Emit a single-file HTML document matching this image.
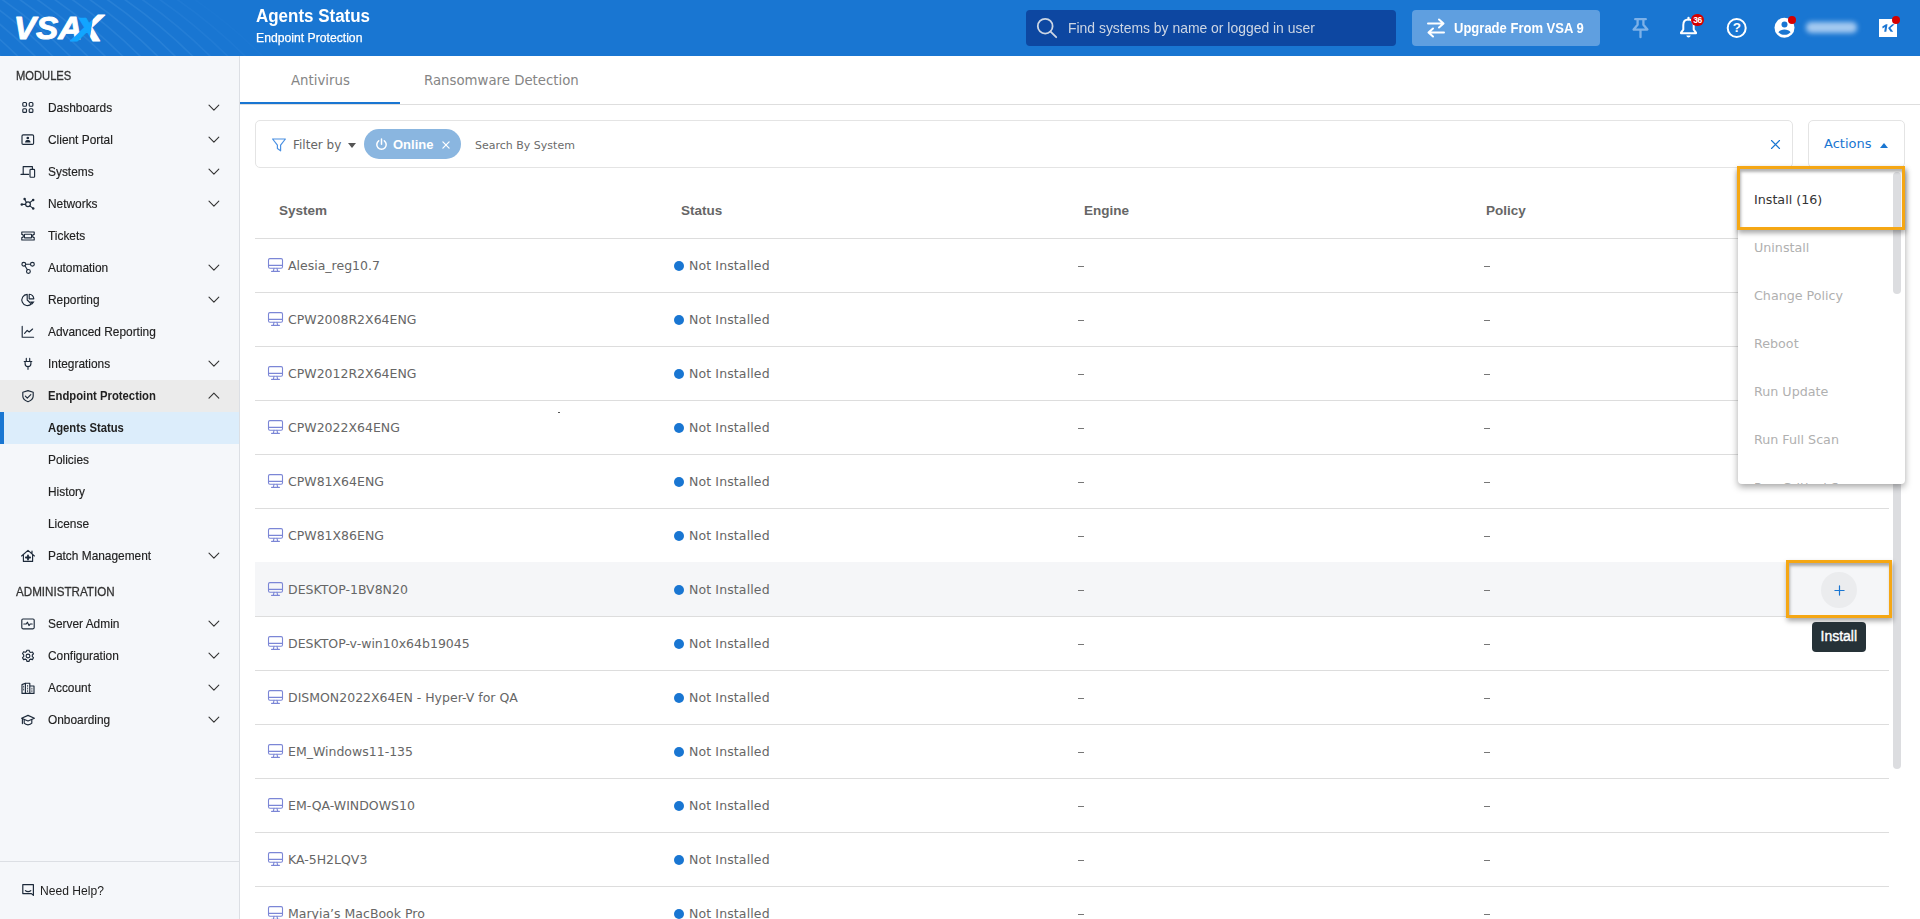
<!DOCTYPE html>
<html lang="en">
<head>
<meta charset="utf-8">
<title>Agents Status</title>
<style>
*{box-sizing:border-box;margin:0;padding:0}
html,body{width:1920px;height:919px;overflow:hidden;background:#fff}
body{font-family:"Liberation Sans",sans-serif;color:#212121;position:relative}
i{display:block;font-style:normal}
.sx{display:inline-block;transform-origin:0 50%;white-space:nowrap}
/* header */
#hdr{position:absolute;left:0;top:0;width:1920px;height:56px;background:#1976d2;overflow:hidden}
#hdr .title{position:absolute;left:256px;top:4px;font-size:18px;font-weight:bold;color:#fff;line-height:24px;transform:scaleX(.942);transform-origin:0 50%;white-space:nowrap}
#hdr .sub{position:absolute;left:256px;top:30px;font-size:13px;color:#fff;line-height:16px;transform:scaleX(.938);transform-origin:0 50%;white-space:nowrap;-webkit-text-stroke:.25px #fff}
#search{position:absolute;left:1026px;top:10px;width:370px;height:36px;background:#0d47a1;border-radius:4px}
#search span{position:absolute;left:42px;top:8px;font-size:15px;line-height:20px;color:#cdd6e4;white-space:nowrap;transform:scaleX(.928);transform-origin:0 50%}
#search svg{position:absolute;left:10px;top:7px;width:22px;height:22px}
#upg{position:absolute;left:1412px;top:10px;width:188px;height:36px;background:#5f9fe0;border-radius:4px}
#upg span{position:absolute;left:42px;top:8px;font-size:14px;font-weight:bold;line-height:20px;color:#fff;white-space:nowrap;transform:scaleX(.93);transform-origin:0 50%}
#upg svg{position:absolute;left:13px;top:7px;width:22px;height:22px}
.hi1{position:absolute}
/* sidebar */
#side{position:absolute;left:0;top:56px;width:240px;height:863px;background:#f5f7fa;border-right:1px solid #dcdfe4}
.sec{position:absolute;left:16px;font-size:13px;color:#333;line-height:16px;white-space:nowrap}
.sec .sx{transform:scaleX(.86);-webkit-text-stroke:.3px #333}
.it{position:absolute;left:0;width:239px;height:32px}
.it .lb{position:absolute;left:48px;top:7px;font-size:13px;line-height:18px;color:#212121;white-space:nowrap;transform:scaleX(.915);transform-origin:0 50%;-webkit-text-stroke:.15px #212121}
.it.b .lb{font-weight:bold;-webkit-text-stroke:0;transform:scaleX(.868)}
.it svg.ic{position:absolute;left:20px;top:8px;width:16px;height:16px}
.it svg.ch{position:absolute;left:207px;top:10px;width:13px;height:12px}
.help{position:absolute;left:0;top:819px;width:239px;height:32px}
.help svg{position:absolute;left:20px;top:7px;width:16px;height:16px}
.help .lb2{position:absolute;left:40px;top:7px;font-size:13px;line-height:18px;color:#212121;white-space:nowrap;transform:scaleX(.93);transform-origin:0 50%}
/* main */
.os{font-family:"DejaVu Sans","Liberation Sans",sans-serif}
#tabs{position:absolute;left:240px;top:56px;width:1680px;height:49px;border-bottom:1px solid #dedede}
.tab{position:absolute;top:0;height:48px;font-size:13.300px;line-height:49px;color:#858585;white-space:nowrap}
#tabline{position:absolute;left:240px;top:102px;width:160px;height:2px;background:#1976d2}
#filter{position:absolute;left:255px;top:120px;width:1538px;height:48px;border:1px solid #e4e4e4;border-radius:5px;background:#fff}
#filter svg.fn{position:absolute;left:15px;top:16px;width:16px;height:16px}
#filter .fb{position:absolute;left:37px;top:15px;font-size:12px;line-height:18px;color:#666;white-space:nowrap}
#filter .car{position:absolute;left:92px;top:22px;width:0;height:0;border-left:4.500px solid transparent;border-right:4.500px solid transparent;border-top:5px solid #555}
#filter .ph{position:absolute;left:219px;top:16px;font-size:11px;line-height:18px;color:#6b6b6b;white-space:nowrap}
#filter svg.x{position:absolute;left:1514px;top:18px;width:11px;height:11px}
#chip{position:absolute;left:364px;top:129px;width:97px;height:30px;border-radius:15px;background:#8ab6e0}
#chip svg.pw{position:absolute;left:11px;top:9px;width:13px;height:13px}
#chip span{position:absolute;left:29px;top:7px;font-size:13px;line-height:18px;font-weight:bold;color:#fff;white-space:nowrap}
#chip svg.x{position:absolute;left:77.500px;top:11.500px;width:8px;height:8px}
#actions{position:absolute;left:1808px;top:120px;width:97px;height:48px;border:1px solid #e4e4e4;border-radius:5px;background:#fff}
#actions span{position:absolute;left:15px;top:14px;font-size:13px;line-height:18px;color:#1976d2;white-space:nowrap}
#actions i{position:absolute;left:71px;top:21.500px;width:0;height:0;border-left:4.600px solid transparent;border-right:4.600px solid transparent;border-bottom:5.200px solid #1976d2}
/* table */
.th{position:absolute;top:202px;font-size:13.5px;line-height:18px;font-weight:bold;color:#666;white-space:nowrap}
.hl{position:absolute;left:255px;width:1634px;height:1px;background:#dddddd}
.row{position:absolute;left:255px;width:1634px;height:54px}
.row .nm{position:absolute;left:33px;top:19px;font-size:12.500px;line-height:18px;color:#666;white-space:nowrap}
.row .st{position:absolute;left:434px;top:19px;letter-spacing:.12px;font-size:12.500px;line-height:18px;color:#666;white-space:nowrap}
.row .dot{position:absolute;left:419px;top:23px;width:10px;height:10px;border-radius:50%;background:#1976d2}
.row .d1{position:absolute;left:823px;top:28px;width:6px;height:1px;background:#777}
.row .d2{position:absolute;left:1229px;top:28px;width:6px;height:1px;background:#777}
.row svg.pc{position:absolute;left:12px;top:19px;width:17px;height:16px}
#pscroll{position:absolute;left:1893px;top:238px;width:8px;height:531px;border-radius:4px;background:#dcdde0}
/* dropdown */
#dd{position:absolute;left:1738px;top:168px;width:167px;height:316px;background:#fff;border-radius:0 0 4px 4px;box-shadow:0 3px 7px rgba(0,0,0,.35);overflow:hidden}
#dd .o{position:absolute;left:16px;font-size:12.700px;line-height:18px;color:#b0b0b0;white-space:nowrap}
#dd .sb{position:absolute;left:155px;top:4px;width:8px;height:122px;border-radius:4px;background:#dcdde0}
.hi{position:absolute;border:3px solid #f5a714;box-shadow:1px 3px 5px rgba(0,0,0,.35), inset 1px 3px 3px rgba(0,0,0,.3)}
#plus{position:absolute;left:1821px;top:572px;width:36px;height:36px;border-radius:50%;background:#ebecee}
#plus svg{position:absolute;left:12.500px;top:12.500px;width:11px;height:11px}
#tip{position:absolute;left:1812px;top:622px;width:54px;height:30px;border-radius:4px;background:#263238}
#tip span{position:absolute;left:8.500px;top:4px;font-size:14px;line-height:20px;color:#fff;white-space:nowrap;-webkit-text-stroke:.4px #fff}
</style>
</head>
<body>
<div id="hdr">
  <svg class="hi1" style="left:0;top:0" width="300" height="56" viewBox="0 0 300 56"><g fill="none" stroke="#3187da" stroke-width="1.600" opacity=".6"><path d="M-70.0 -2Q-32.0 24 2.0 58" opacity="1.00"/><path d="M-52.5 -2Q-14.5 24 19.5 58" opacity="1.00"/><path d="M-35.0 -2Q3.0 24 37.0 58" opacity="1.00"/><path d="M-17.5 -2Q20.5 24 54.5 58" opacity="1.00"/><path d="M0.0 -2Q38.0 24 72.0 58" opacity="1.00"/><path d="M17.5 -2Q55.5 24 89.5 58" opacity="1.00"/><path d="M35.0 -2Q73.0 24 107.0 58" opacity="1.00"/><path d="M52.5 -2Q90.5 24 124.5 58" opacity="1.00"/><path d="M70.0 -2Q108.0 24 142.0 58" opacity="1.00"/><path d="M87.5 -2Q125.5 24 159.5 58" opacity="1.00"/><path d="M105.0 -2Q143.0 24 177.0 58" opacity="1.00"/><path d="M122.5 -2Q160.5 24 194.5 58" opacity="0.97"/><path d="M140.0 -2Q178.0 24 212.0 58" opacity="0.78"/><path d="M157.5 -2Q195.5 24 229.5 58" opacity="0.58"/><path d="M175.0 -2Q213.0 24 247.0 58" opacity="0.39"/><path d="M192.5 -2Q230.5 24 264.5 58" opacity="0.19"/></g></svg>
  <svg class="hi1" style="left:10px;top:8px" width="100" height="40" viewBox="0 0 100 40" font-family="Liberation Sans, sans-serif" font-weight="bold" font-style="italic" stroke-width=".9" stroke-linejoin="round"><defs><clipPath id="cl"><polygon points="55,9.800 83,9.800 78.500,40 55,40"/></clipPath><clipPath id="cr"><polygon points="84.500,0 100,0 100,40 78.500,40"/></clipPath></defs><text x="3.800" y="30.700" font-size="31" fill="#fff" stroke="#fff" textLength="68.500" lengthAdjust="spacingAndGlyphs">VSA</text><g clip-path="url(#cl)"><text x="62.500" y="33" font-size="36.600" fill="#12a5ff" stroke="#12a5ff" textLength="30" lengthAdjust="spacingAndGlyphs">X</text></g><g clip-path="url(#cr)"><text x="62.500" y="33" font-size="36.600" fill="#fff" stroke="#fff" textLength="30" lengthAdjust="spacingAndGlyphs">X</text></g></svg>
  <div class="title">Agents Status</div>
  <div class="sub">Endpoint Protection</div>
  <div id="search"><svg viewBox="0 0 22 22" fill="none" stroke="#cdd6e4" stroke-width="1.800" stroke-linecap="round"><circle cx="9.200" cy="9.200" r="7.400"/><path d="M14.600 14.600l5.600 5.600"/></svg><span>Find systems by name or logged in user</span></div>
  <div id="upg"><svg viewBox="0 0 22 22" fill="none" stroke="#fff" stroke-width="2" stroke-linecap="round" stroke-linejoin="round"><path d="M3 6.500h15M14 2.500l4.500 4-4.500 4M19 15.500H4M8 11.500l-4.500 4 4.500 4"/></svg><span>Upgrade From VSA 9</span></div>
  <svg class="hi1" style="left:1630px;top:16px" width="22" height="24" viewBox="0 0 22 24" fill="none" stroke="#7db1e8" stroke-width="2.300" stroke-linecap="round" stroke-linejoin="round"><path d="M5.200 3.200h10.600M7.600 3.400v5.400L3.600 13.600h13.800L13.400 8.800V3.400M10.500 13.800v7.400"/></svg>
  <svg class="hi1" style="left:1678px;top:16px" width="22" height="24" viewBox="0 0 22 24" fill="none" stroke="#fff" stroke-width="2" stroke-linejoin="round"><path d="M10.500 3.600c-3.200 0-5.200 2.200-5.200 5.400v4.600L3 16.600v.6h15v-.6l-2.300-3V9c0-3.200-2-5.400-5.200-5.400z"/><path d="M10.500 1.800v1.600" stroke-linecap="round" stroke-width="2.200"/><path d="M8.300 19.600h4.400c-.3 1.300-1.100 2-2.200 2s-1.900-.7-2.200-2z" fill="#fff" stroke="none"/></svg>
  <div class="hi1" style="left:1691.300px;top:13.700px;width:12.600px;height:12.600px;border-radius:50%;background:#d50000"></div>
  <div class="hi1" style="left:1691.300px;top:15.500px;width:12.600px;text-align:center;font-size:8.500px;line-height:9px;font-weight:bold;color:#fff;letter-spacing:-.4px">36</div>
  <svg class="hi1" style="left:1725px;top:16px" width="24" height="24" viewBox="0 0 24 24" fill="none" stroke="#fff" stroke-width="2"><circle cx="11.700" cy="12" r="9"/></svg>
  <div class="hi1" style="left:1728px;top:18px;width:17.500px;text-align:center;font-size:13.500px;line-height:20px;font-weight:bold;color:#fff">?</div>
  <svg class="hi1" style="left:1773px;top:16px" width="24" height="24" viewBox="0 0 24 24"><circle cx="11.500" cy="11.800" r="10" fill="#fff"/><circle cx="11.500" cy="8.600" r="3" fill="#1976d2"/><path d="M5.400 16.200c1.200-1.800 3.600-2.700 6.100-2.700s4.900.9 6.100 2.700c-1.600 1.700-3.600 2.600-6.100 2.600s-4.500-.9-6.100-2.600z" fill="#1976d2"/></svg>
  <div class="hi1" style="left:1787.900px;top:15.900px;width:8px;height:8px;border-radius:50%;background:#d50000"></div>
  <div class="hi1" style="left:1806px;top:22px;width:51px;height:10.500px;border-radius:5px;background:#a4c9f0;filter:blur(2.600px)"></div>
  <div class="hi1" style="left:1879px;top:19px;width:18.300px;height:18.200px;background:#fff"></div>
  <svg class="hi1" style="left:1879px;top:19px" width="18.300" height="18.200" viewBox="0 0 18.300 18.200" fill="#1b76d3"><path d="M3.300 7.600L7 5.300h1.500L7.300 12.700H5.200l.8-4.700-2.400 1.400zM13.200 5.300h2.500l-4.300 3.600 2.800 3.800h-2.600l-2.500-3.700z"/></svg>
  <div class="hi1" style="left:1892.100px;top:15.900px;width:8px;height:8px;border-radius:50%;background:#d50000"></div>
</div>
<div id="side">
<div class="sec" style="top:12px"><span class="sx">MODULES</span></div>
<div class="it" style="top:36px"><svg class="ic" viewBox="0 0 16 16" fill="none" stroke="#1d2a3a" stroke-width="1.15" stroke-linecap="round" stroke-linejoin="round"><rect x="2.8" y="2.5" width="3.7" height="3.7" rx="1"/><rect x="9.2" y="2.5" width="3.7" height="3.7" rx="1"/><rect x="2.8" y="8.7" width="3.7" height="3.7" rx="1"/><rect x="9.2" y="8.7" width="3.7" height="3.7" rx="1"/></svg><span class="lb">Dashboards</span><svg class="ch" viewBox="0 0 13 12" fill="none" stroke="#333" stroke-width="1.1" stroke-linecap="round" stroke-linejoin="round"><path d="M2 3.200l4.900 5 4.900-5"/></svg></div>
<div class="it" style="top:68px"><svg class="ic" viewBox="0 0 16 16" fill="none" stroke="#1d2a3a" stroke-width="1.15" stroke-linecap="round" stroke-linejoin="round"><rect x="2" y="2.8" width="11.6" height="9.6" rx="1.2"/><circle cx="7.8" cy="6" r="1.35" fill="#1d2a3a" stroke="none"/><path d="M5.1 10.4c0-1.800 1.100-2.400 2.700-2.400s2.700.6 2.700 2.400z" fill="#1d2a3a" stroke="none"/></svg><span class="lb">Client Portal</span><svg class="ch" viewBox="0 0 13 12" fill="none" stroke="#333" stroke-width="1.1" stroke-linecap="round" stroke-linejoin="round"><path d="M2 3.200l4.900 5 4.900-5"/></svg></div>
<div class="it" style="top:100px"><svg class="ic" viewBox="0 0 16 16" fill="none" stroke="#1d2a3a" stroke-width="1.15" stroke-linecap="round" stroke-linejoin="round"><path d="M3.200 10V2.600h9.200v2.400M1 10.400h7.600"/><rect x="10" y="5.400" width="4.600" height="7.800" rx="0.8"/></svg><span class="lb">Systems</span><svg class="ch" viewBox="0 0 13 12" fill="none" stroke="#333" stroke-width="1.1" stroke-linecap="round" stroke-linejoin="round"><path d="M2 3.200l4.900 5 4.900-5"/></svg></div>
<div class="it" style="top:132px"><svg class="ic" viewBox="0 0 16 16" fill="none" stroke="#1d2a3a" stroke-width="1.15" stroke-linecap="round" stroke-linejoin="round"><circle cx="8" cy="8.2" r="2.4"/><path d="M6.4 6.4L4.8 3.4M9.8 6.6l3-2.4M9.8 9.9l3 2.2M5.6 8.4H2.2"/><circle cx="4.6" cy="3" r="1.25" fill="#1d2a3a" stroke="none"/><circle cx="13.2" cy="3.9" r="1.25" fill="#1d2a3a" stroke="none"/><circle cx="13.2" cy="12.4" r="1.25" fill="#1d2a3a" stroke="none"/><circle cx="1.8" cy="8.4" r="1.25" fill="#1d2a3a" stroke="none"/></svg><span class="lb">Networks</span><svg class="ch" viewBox="0 0 13 12" fill="none" stroke="#333" stroke-width="1.1" stroke-linecap="round" stroke-linejoin="round"><path d="M2 3.200l4.900 5 4.900-5"/></svg></div>
<div class="it" style="top:164px"><svg class="ic" viewBox="0 0 16 16" fill="none" stroke="#1d2a3a" stroke-width="1.15" stroke-linecap="round" stroke-linejoin="round"><path d="M1.8 4h12.4v2.4a1.6 1.6 0 0 0 0 3.2V12H1.8V9.6a1.6 1.6 0 0 0 0-3.2z"/><rect x="4.4" y="6.2" width="7.2" height="3.6" rx="0.6"/></svg><span class="lb">Tickets</span></div>
<div class="it" style="top:196px"><svg class="ic" viewBox="0 0 16 16" fill="none" stroke="#1d2a3a" stroke-width="1.15" stroke-linecap="round" stroke-linejoin="round"><circle cx="3.8" cy="4.200" r="1.9"/><circle cx="12.400" cy="4.200" r="1.9"/><circle cx="8.400" cy="11.400" r="1.9"/><path d="M5.700 4.200h4.800M4.900 5.800l2.500 4"/></svg><span class="lb">Automation</span><svg class="ch" viewBox="0 0 13 12" fill="none" stroke="#333" stroke-width="1.1" stroke-linecap="round" stroke-linejoin="round"><path d="M2 3.200l4.900 5 4.900-5"/></svg></div>
<div class="it" style="top:228px"><svg class="ic" viewBox="0 0 16 16" fill="none" stroke="#1d2a3a" stroke-width="1.15" stroke-linecap="round" stroke-linejoin="round"><path d="M7.2 2.4a5.6 5.6 0 1 0 4.2 9.6L7.2 8z"/><path d="M9.2 2.2a5 5 0 0 1 4.6 4.6H9.2z"/><path d="M10 9.4h4.6l-2.3 3z" fill="#1d2a3a" stroke="none"/></svg><span class="lb">Reporting</span><svg class="ch" viewBox="0 0 13 12" fill="none" stroke="#333" stroke-width="1.1" stroke-linecap="round" stroke-linejoin="round"><path d="M2 3.200l4.900 5 4.900-5"/></svg></div>
<div class="it" style="top:260px"><svg class="ic" viewBox="0 0 16 16" fill="none" stroke="#1d2a3a" stroke-width="1.15" stroke-linecap="round" stroke-linejoin="round"><path d="M2.2 2.4v10.8h11.4"/><path d="M4.6 9.4l2.6-3 2 1.6 3.4-3"/></svg><span class="lb">Advanced Reporting</span></div>
<div class="it" style="top:292px"><svg class="ic" viewBox="0 0 16 16" fill="none" stroke="#1d2a3a" stroke-width="1.15" stroke-linecap="round" stroke-linejoin="round"><path d="M6.300 2.400v3M9.700 2.400v3M4.200 5.500h7.600M5.100 5.700v2a2.900 2.900 0 0 0 5.800 0v-2M8 10.800v2.500"/></svg><span class="lb">Integrations</span><svg class="ch" viewBox="0 0 13 12" fill="none" stroke="#333" stroke-width="1.1" stroke-linecap="round" stroke-linejoin="round"><path d="M2 3.200l4.900 5 4.900-5"/></svg></div>
<div class="it b" style="top:324px;background:#ebebeb"><svg class="ic" viewBox="0 0 16 16" fill="none" stroke="#1d2a3a" stroke-width="1.15" stroke-linecap="round" stroke-linejoin="round"><path d="M8 2.600l5.200 1.600v3.800c0 2.800-2.100 4.600-5.200 5.700-3.100-1.100-5.200-2.900-5.200-5.700V4.200z"/><path d="M5.400 8.200l1.900 1.900 3.500-3.500"/></svg><span class="lb">Endpoint Protection</span><svg class="ch" viewBox="0 0 13 12" fill="none" stroke="#333" stroke-width="1.1" stroke-linecap="round" stroke-linejoin="round"><path d="M2 8.200l4.900-5 4.900 5"/></svg></div>
<div class="it" style="top:484px"><svg class="ic" viewBox="0 0 16 16" fill="none" stroke="#1d2a3a" stroke-width="1.15" stroke-linecap="round" stroke-linejoin="round"><path d="M1.6 8L8 2.4 14.4 8M3.4 6.8v6.6h9.2V6.8M12 5.6V3"/><path d="M8 7.4v4.2M5.9 9.5h4.2" stroke-width="1.8"/></svg><span class="lb">Patch Management</span><svg class="ch" viewBox="0 0 13 12" fill="none" stroke="#333" stroke-width="1.1" stroke-linecap="round" stroke-linejoin="round"><path d="M2 3.200l4.900 5 4.900-5"/></svg></div>
<div class="it" style="top:552px"><svg class="ic" viewBox="0 0 16 16" fill="none" stroke="#1d2a3a" stroke-width="1.15" stroke-linecap="round" stroke-linejoin="round"><rect x="1.8" y="3" width="12.4" height="9.8" rx="1.2"/><path d="M3.8 8h2.4l1.2-1.8 1.6 3.4 1.2-1.6h2"/></svg><span class="lb">Server Admin</span><svg class="ch" viewBox="0 0 13 12" fill="none" stroke="#333" stroke-width="1.1" stroke-linecap="round" stroke-linejoin="round"><path d="M2 3.200l4.900 5 4.900-5"/></svg></div>
<div class="it" style="top:584px"><svg class="ic" viewBox="0 0 16 16" fill="none" stroke="#1d2a3a" stroke-width="1.15" stroke-linecap="round" stroke-linejoin="round"><circle cx="8" cy="8" r="1.9"/><path d="M6.9 2.2h2.2l.4 1.6 1.3.7 1.6-.5 1.1 1.9-1.2 1.1v1.6l1.2 1.1-1.1 1.9-1.6-.5-1.3.7-.4 1.6H6.900l-.4-1.6-1.3-.7-1.6.5-1.100-1.900 1.200-1.100V6.800l-1.200-1.100 1.100-1.900 1.600.5 1.300-.7z"/></svg><span class="lb">Configuration</span><svg class="ch" viewBox="0 0 13 12" fill="none" stroke="#333" stroke-width="1.1" stroke-linecap="round" stroke-linejoin="round"><path d="M2 3.200l4.900 5 4.900-5"/></svg></div>
<div class="it" style="top:616px"><svg class="ic" viewBox="0 0 16 16" fill="none" stroke="#1d2a3a" stroke-width="1.15" stroke-linecap="round" stroke-linejoin="round"><path d="M2 4.600l3.400-1.400v10.200H2zM5.400 3.200h4.400v10.200H5.400zM9.800 6h4.200v7.400H9.800z"/><path d="M3.600 6.200v1M3.600 9v1M7.600 5.400v1M7.600 8v1M7.600 10.600v1M11.900 8.200v1M11.900 10.600v1" stroke-width=".8"/></svg><span class="lb">Account</span><svg class="ch" viewBox="0 0 13 12" fill="none" stroke="#333" stroke-width="1.1" stroke-linecap="round" stroke-linejoin="round"><path d="M2 3.200l4.900 5 4.900-5"/></svg></div>
<div class="it" style="top:648px"><svg class="ic" viewBox="0 0 16 16" fill="none" stroke="#1d2a3a" stroke-width="1.15" stroke-linecap="round" stroke-linejoin="round"><path d="M1.600 6.200L8 3.400l6.400 2.800L8 9z"/><path d="M4.200 7.600v3.600c1 1.200 2.400 1.600 3.800 1.600s2.800-.4 3.800-1.600V7.600M2.400 6.800v4.800"/></svg><span class="lb">Onboarding</span><svg class="ch" viewBox="0 0 13 12" fill="none" stroke="#333" stroke-width="1.1" stroke-linecap="round" stroke-linejoin="round"><path d="M2 3.200l4.900 5 4.900-5"/></svg></div>
<div class="it b" style="top:356px;background:#dcedfb"><div style="position:absolute;left:0;top:0;width:4px;height:32px;background:#1976d2"></div><span class="lb">Agents Status</span></div>
<div class="it" style="top:388px"><span class="lb">Policies</span></div>
<div class="it" style="top:420px"><span class="lb">History</span></div>
<div class="it" style="top:452px"><span class="lb">License</span></div>
<div class="sec" style="top:528px"><span class="sx" style="transform:scaleX(.894)">ADMINISTRATION</span></div>
<div style="position:absolute;left:0;top:805px;width:239px;height:1px;background:#dcdfe4"></div>
<div class="help"><svg viewBox="0 0 16 16" fill="none" stroke="#1d2a3a" stroke-width="1.2" stroke-linejoin="round" stroke-linecap="round"><path d="M2.800 2.600h10.600v10.800l-2-1.800H2.800z"/><path d="M5.400 8.600c.8.800 1.700 1 2.700 1s1.900-.2 2.700-1"/></svg><span class="lb2">Need Help?</span></div>
</div>
<div id="tabs">
  <div class="tab os" style="left:51px">Antivirus</div>
  <div class="tab os" style="left:184px">Ransomware Detection</div>
</div>
<div id="tabline"></div>
<div id="filter">
  <svg class="fn" viewBox="0 0 16 16" fill="none" stroke="#4a90e2" stroke-width="1.200" stroke-linejoin="round"><path d="M1.600 2h12.800L9.600 8.200v5.600L6.400 11.600V8.200z"/></svg>
  <span class="fb os">Filter by</span><i class="car"></i>
  <span class="ph os">Search By System</span>
  <svg class="x" viewBox="0 0 11 11" stroke="#1976d2" stroke-width="1.100" stroke-linecap="round"><path d="M1.500 1.500l8 8M9.500 1.500l-8 8"/></svg>
</div>
<div id="chip"><svg class="pw" viewBox="0 0 13 13" fill="none" stroke="#fff" stroke-width="1.500" stroke-linecap="round"><path d="M6.500 1v5.200"/><path d="M3.700 2.800a4.700 4.700 0 1 0 5.600 0"/></svg><span>Online</span><svg class="x" viewBox="0 0 9 9" stroke="#fff" stroke-width="1.400" stroke-linecap="round"><path d="M1 1l7 7M8 1l-7 7"/></svg></div>
<div id="actions"><span class="os">Actions</span><i></i></div>

<div class="th" style="left:279px">System</div>
<div class="th" style="left:681px">Status</div>
<div class="th" style="left:1084px">Engine</div>
<div class="th" style="left:1486px">Policy</div>
<div class="hl" style="top:238px"></div>
<div class="row" style="top:238px"><svg class="pc" viewBox="0 0 17 16" fill="none" stroke="#7b86d6" stroke-width="1.1" stroke-linejoin="round" stroke-linecap="round"><rect x="1.500" y="1.600" width="14" height="9.600" rx="1.400"/><path d="M1.500 8.400h14M7 11.400l-.6 2.600M10 11.400l.6 2.600M4.600 14.400h7.800"/></svg><span class="nm os">Alesia_reg10.7</span><i class="dot"></i><span class="st os">Not Installed</span><i class="d1"></i><i class="d2"></i></div>
<div class="hl" style="top:292px"></div>
<div class="row" style="top:292px"><svg class="pc" viewBox="0 0 17 16" fill="none" stroke="#7b86d6" stroke-width="1.1" stroke-linejoin="round" stroke-linecap="round"><rect x="1.500" y="1.600" width="14" height="9.600" rx="1.400"/><path d="M1.500 8.400h14M7 11.400l-.6 2.600M10 11.400l.6 2.600M4.600 14.400h7.800"/></svg><span class="nm os">CPW2008R2X64ENG</span><i class="dot"></i><span class="st os">Not Installed</span><i class="d1"></i><i class="d2"></i></div>
<div class="hl" style="top:346px"></div>
<div class="row" style="top:346px"><svg class="pc" viewBox="0 0 17 16" fill="none" stroke="#7b86d6" stroke-width="1.1" stroke-linejoin="round" stroke-linecap="round"><rect x="1.500" y="1.600" width="14" height="9.600" rx="1.400"/><path d="M1.500 8.400h14M7 11.400l-.6 2.600M10 11.400l.6 2.600M4.600 14.400h7.800"/></svg><span class="nm os">CPW2012R2X64ENG</span><i class="dot"></i><span class="st os">Not Installed</span><i class="d1"></i><i class="d2"></i></div>
<div class="hl" style="top:400px"></div>
<div class="row" style="top:400px"><svg class="pc" viewBox="0 0 17 16" fill="none" stroke="#7b86d6" stroke-width="1.1" stroke-linejoin="round" stroke-linecap="round"><rect x="1.500" y="1.600" width="14" height="9.600" rx="1.400"/><path d="M1.500 8.400h14M7 11.400l-.6 2.600M10 11.400l.6 2.600M4.600 14.400h7.800"/></svg><span class="nm os">CPW2022X64ENG</span><i class="dot"></i><span class="st os">Not Installed</span><i class="d1"></i><i class="d2"></i></div>
<div class="hl" style="top:454px"></div>
<div class="row" style="top:454px"><svg class="pc" viewBox="0 0 17 16" fill="none" stroke="#7b86d6" stroke-width="1.1" stroke-linejoin="round" stroke-linecap="round"><rect x="1.500" y="1.600" width="14" height="9.600" rx="1.400"/><path d="M1.500 8.400h14M7 11.400l-.6 2.600M10 11.400l.6 2.600M4.600 14.400h7.800"/></svg><span class="nm os">CPW81X64ENG</span><i class="dot"></i><span class="st os">Not Installed</span><i class="d1"></i><i class="d2"></i></div>
<div class="hl" style="top:508px"></div>
<div class="row" style="top:508px"><svg class="pc" viewBox="0 0 17 16" fill="none" stroke="#7b86d6" stroke-width="1.1" stroke-linejoin="round" stroke-linecap="round"><rect x="1.500" y="1.600" width="14" height="9.600" rx="1.400"/><path d="M1.500 8.400h14M7 11.400l-.6 2.600M10 11.400l.6 2.600M4.600 14.400h7.800"/></svg><span class="nm os">CPW81X86ENG</span><i class="dot"></i><span class="st os">Not Installed</span><i class="d1"></i><i class="d2"></i></div>
<div class="hl" style="top:562px"></div>
<div class="row" style="top:562px;background:#f5f6f8"><svg class="pc" viewBox="0 0 17 16" fill="none" stroke="#7b86d6" stroke-width="1.1" stroke-linejoin="round" stroke-linecap="round"><rect x="1.500" y="1.600" width="14" height="9.600" rx="1.400"/><path d="M1.500 8.400h14M7 11.400l-.6 2.600M10 11.400l.6 2.600M4.600 14.400h7.800"/></svg><span class="nm os">DESKTOP-1BV8N20</span><i class="dot"></i><span class="st os">Not Installed</span><i class="d1"></i><i class="d2"></i></div>
<div class="hl" style="top:616px"></div>
<div class="row" style="top:616px"><svg class="pc" viewBox="0 0 17 16" fill="none" stroke="#7b86d6" stroke-width="1.1" stroke-linejoin="round" stroke-linecap="round"><rect x="1.500" y="1.600" width="14" height="9.600" rx="1.400"/><path d="M1.500 8.400h14M7 11.400l-.6 2.600M10 11.400l.6 2.600M4.600 14.400h7.800"/></svg><span class="nm os">DESKTOP-v-win10x64b19045</span><i class="dot"></i><span class="st os">Not Installed</span><i class="d1"></i><i class="d2"></i></div>
<div class="hl" style="top:670px"></div>
<div class="row" style="top:670px"><svg class="pc" viewBox="0 0 17 16" fill="none" stroke="#7b86d6" stroke-width="1.1" stroke-linejoin="round" stroke-linecap="round"><rect x="1.500" y="1.600" width="14" height="9.600" rx="1.400"/><path d="M1.500 8.400h14M7 11.400l-.6 2.600M10 11.400l.6 2.600M4.600 14.400h7.800"/></svg><span class="nm os">DISMON2022X64EN - Hyper-V for QA</span><i class="dot"></i><span class="st os">Not Installed</span><i class="d1"></i><i class="d2"></i></div>
<div class="hl" style="top:724px"></div>
<div class="row" style="top:724px"><svg class="pc" viewBox="0 0 17 16" fill="none" stroke="#7b86d6" stroke-width="1.1" stroke-linejoin="round" stroke-linecap="round"><rect x="1.500" y="1.600" width="14" height="9.600" rx="1.400"/><path d="M1.500 8.400h14M7 11.400l-.6 2.600M10 11.400l.6 2.600M4.600 14.400h7.800"/></svg><span class="nm os">EM_Windows11-135</span><i class="dot"></i><span class="st os">Not Installed</span><i class="d1"></i><i class="d2"></i></div>
<div class="hl" style="top:778px"></div>
<div class="row" style="top:778px"><svg class="pc" viewBox="0 0 17 16" fill="none" stroke="#7b86d6" stroke-width="1.1" stroke-linejoin="round" stroke-linecap="round"><rect x="1.500" y="1.600" width="14" height="9.600" rx="1.400"/><path d="M1.500 8.400h14M7 11.400l-.6 2.600M10 11.400l.6 2.600M4.600 14.400h7.800"/></svg><span class="nm os">EM-QA-WINDOWS10</span><i class="dot"></i><span class="st os">Not Installed</span><i class="d1"></i><i class="d2"></i></div>
<div class="hl" style="top:832px"></div>
<div class="row" style="top:832px"><svg class="pc" viewBox="0 0 17 16" fill="none" stroke="#7b86d6" stroke-width="1.1" stroke-linejoin="round" stroke-linecap="round"><rect x="1.500" y="1.600" width="14" height="9.600" rx="1.400"/><path d="M1.500 8.400h14M7 11.400l-.6 2.600M10 11.400l.6 2.600M4.600 14.400h7.800"/></svg><span class="nm os">KA-5H2LQV3</span><i class="dot"></i><span class="st os">Not Installed</span><i class="d1"></i><i class="d2"></i></div>
<div class="hl" style="top:886px"></div>
<div class="row" style="top:886px"><svg class="pc" viewBox="0 0 17 16" fill="none" stroke="#7b86d6" stroke-width="1.1" stroke-linejoin="round" stroke-linecap="round"><rect x="1.500" y="1.600" width="14" height="9.600" rx="1.400"/><path d="M1.500 8.400h14M7 11.400l-.6 2.600M10 11.400l.6 2.600M4.600 14.400h7.800"/></svg><span class="nm os">Maryia’s MacBook Pro</span><i class="dot"></i><span class="st os">Not Installed</span><i class="d1"></i><i class="d2"></i></div>
<div class="hl" style="top:940px"></div>
<div id="pscroll"></div>
<div style="position:absolute;left:558px;top:412px;width:2px;height:1px;background:#555"></div>

<div id="plus"><svg viewBox="0 0 12 12" stroke="#1976d2" stroke-width="1.300" stroke-linecap="round"><path d="M6 1v10M1 6h10"/></svg></div>
<div class="hi" style="left:1786px;top:560px;width:106px;height:58px"></div>
<div id="tip"><span>Install</span></div>

<div id="dd">
  <div class="o os" style="top:23px;color:#333">Install (16)</div>
  <div class="o os" style="top:71px">Uninstall</div>
  <div class="o os" style="top:119px">Change Policy</div>
  <div class="o os" style="top:167px">Reboot</div>
  <div class="o os" style="top:215px">Run Update</div>
  <div class="o os" style="top:263px">Run Full Scan</div>
  <div class="o os" style="top:311px">Run Critical Scan</div>
  <div class="sb"></div>
</div>
<div class="hi" style="left:1737px;top:166px;width:168px;height:64px"></div>
</body>
</html>
